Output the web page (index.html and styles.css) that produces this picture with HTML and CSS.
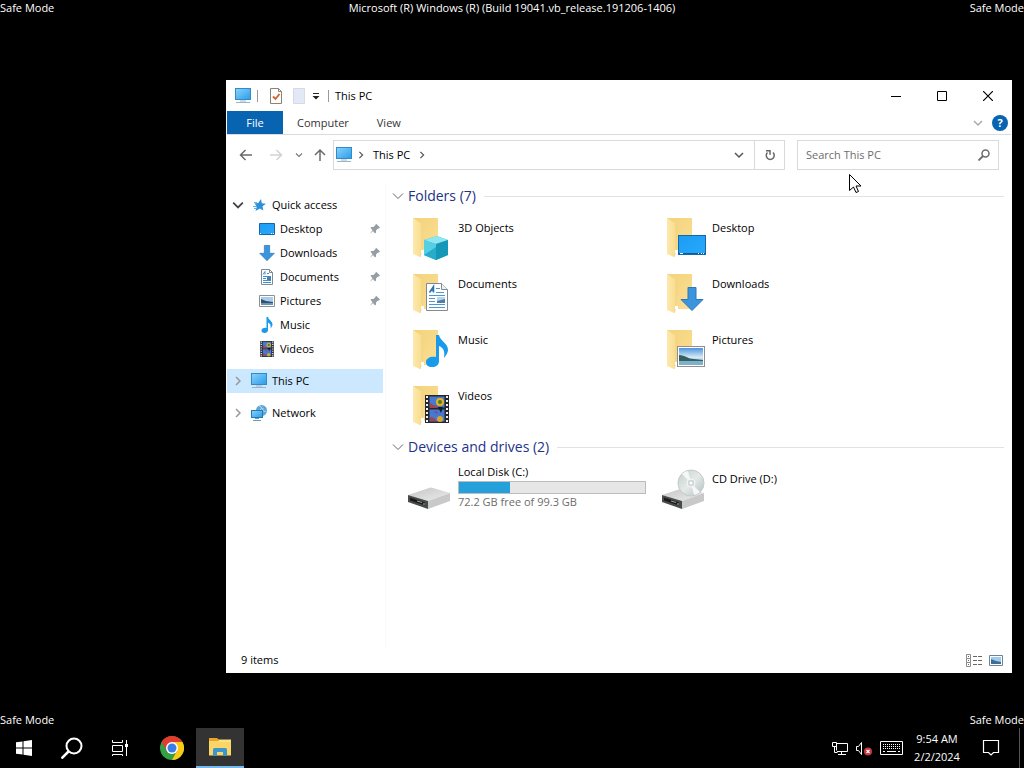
FILE: index.html
```html
<!DOCTYPE html>
<html lang="en">
<head>
    <meta charset="UTF-8">
    <meta name="viewport" content="width=device-width, initial-scale=1.0">
    <title>This PC</title>
    <link rel="stylesheet" href="styles.css">
</head>
<body>
    <!-- Shared icon shapes -->
    <svg class="sprite" aria-hidden="true">
        <defs>
            <linearGradient id="g-screen" x1="0" y1="0" x2="1" y2="1">
                <stop offset="0" stop-color="#8ad4fb"/>
                <stop offset="1" stop-color="#2a9ce8"/>
            </linearGradient>
            <linearGradient id="g-blue" x1="0" y1="0" x2="1" y2="1">
                <stop offset="0" stop-color="#1c9df5"/>
                <stop offset="1" stop-color="#27a9fb"/>
            </linearGradient>
            <linearGradient id="g-back" x1="0" y1="0" x2="1" y2="1">
                <stop offset="0" stop-color="#f3d27c"/>
                <stop offset="1" stop-color="#fbdf94"/>
            </linearGradient>
            <linearGradient id="g-flap" x1="0" y1="0" x2="1" y2="0">
                <stop offset="0" stop-color="#fde9ae"/>
                <stop offset="1" stop-color="#f9dc8c"/>
            </linearGradient>
            <linearGradient id="g-sky" x1="0" y1="0" x2="0" y2="1">
                <stop offset="0" stop-color="#4f93dc"/>
                <stop offset="0.55" stop-color="#d6ebf7"/>
                <stop offset="1" stop-color="#5b8fae"/>
            </linearGradient>
            <linearGradient id="g-top" x1="0" y1="0" x2="1" y2="1">
                <stop offset="0" stop-color="#c4c4c4"/>
                <stop offset="1" stop-color="#ececec"/>
            </linearGradient>
            <linearGradient id="g-disc" x1="0" y1="0" x2="1" y2="1">
                <stop offset="0" stop-color="#c3cccb"/>
                <stop offset="0.5" stop-color="#e4eae8"/>
                <stop offset="1" stop-color="#b4bfbd"/>
            </linearGradient>
        </defs>
        <symbol id="pc" viewBox="0 0 16 16">
            <rect x="0.5" y="0.5" width="15" height="11" fill="url(#g-screen)" stroke="#2f8bcb"/>
            <path d="M5 13h6M1 14.5h14" stroke="#9db3c3" fill="none"/>
        </symbol>
        <symbol id="folder" viewBox="0 0 48 48">
            <path d="M5 4h25v35H12z" fill="url(#g-back)"/>
            <path d="M5 4l9 6v27l-2 6-7-3z" fill="url(#g-flap)"/>
            <path d="M14 10v27l-2 6" fill="none" stroke="#edcf85" stroke-width="0.7"/>
            <path d="M13 36h3v3h-3z" fill="#fff"/>
        </symbol>
        <symbol id="arrow-down" viewBox="0 0 24 24">
            <path d="M8 0.5h8v12h7L12 23.5 1 12.5h7z" fill="#3c94dc" stroke="#2b78bd"/>
        </symbol>
        <symbol id="note" viewBox="0 0 22 32">
            <path d="M10 0h3c1 6 9 8 9 15 0 3-2 5-4 8 1-6 0-10-5-12v15c0 4-3 6-7 6-4 0-6-2-6-5 0-4 5-6 10-5z" fill="#179bea"/>
        </symbol>
        <symbol id="film" viewBox="0 0 24 28">
            <rect width="24" height="28" fill="#26272c"/>
            <path d="M2 1v27M22 1v27" stroke="#f4f4f4" stroke-width="2" stroke-dasharray="2 2"/>
            <path d="M4.500 1.500h15v11h-15zM4.500 14.500h15v12h-15z" fill="#4679cf"/>
            <path d="M5 8l3 2 4 1v2H5zM5 22l4 1 3 3H5z" fill="#a83f4b"/>
            <circle cx="15" cy="7" r="4" fill="#e6b51e"/>
            <circle cx="15" cy="7" r="2" fill="#4a7a2a"/>
            <path d="M13 12h5l-2 6z" fill="#191b20"/>
            <circle cx="15" cy="24" r="3" fill="#d9a82a"/>
            <path d="M8 17l4-1 1 3z" fill="#7b4a9c"/>
        </symbol>
        <symbol id="doc" viewBox="0 0 22 28">
            <path d="M0.500 0.500h15l6 6v21h-21z" fill="#fff" stroke="#7e8a94"/>
            <path d="M15.500 0.500v6h6" fill="#eef2f5" stroke="#7e8a94"/>
            <path d="M3.500 9.500L7.500 3.500v6M5 7.500h3" fill="none" stroke="#2a72b8" stroke-width="1.500"/>
            <path d="M10 5.500h4M10 9.500h8M3 12.500h16M3 15.500h6M3 18.500h6M3 21.500h16M3 24.500h16" stroke="#4f97cc"/>
            <path d="M11 14h8v6h-8z" fill="#4d7fa8"/>
            <path d="M11 14h8v2l-8 2z" fill="#b9d5ea"/>
        </symbol>
        <symbol id="photo" viewBox="0 0 28 21">
            <rect x="0.500" y="0.500" width="27" height="20" fill="#fff" stroke="#8f8f8f"/>
            <rect x="2" y="2" width="24" height="17" fill="url(#g-sky)"/>
            <path d="M2 9c6 0 9 4 15 4l9 1v1H2z" fill="#34605f"/>
            <path d="M2 15h24v4H2z" fill="#7fb0cb"/>
        </symbol>
        <symbol id="screen" viewBox="0 0 28 20">
            <rect x="0.500" y="0.500" width="27" height="19" fill="url(#g-blue)" stroke="#1667a5"/>
            <path d="M1 18.500h26" stroke="#0d5a96"/>
            <path d="M2 18.500h3M20 18.500h1M23 18.500h1M25 18.500h1" stroke="#fff"/>
        </symbol>
        <symbol id="pin" viewBox="0 0 12 12">
            <path d="M7.500 1L11 4.500l-1 1H9L7 7.500l0 2-1 1L4 8 1 11l2.500-4L1.500 5l1-1h2l2-2V1.500z" fill="#979da2"/>
        </symbol>
        <symbol id="drive" viewBox="0 0 42 22">
            <path d="M0 8L21 1q2-1 4 0l17 5-22 8z" fill="url(#g-top)"/>
            <path d="M0 8l20 6v8L0 15z" fill="#4a4a4a"/>
            <path d="M20 14l22-8v8l-22 8z" fill="#c9c9c9"/>
            <path d="M2 10.500l15 5v3L2 13.500z" fill="#1b1b1b"/>
            <path d="M9 14l5 1.500" stroke="#9f9f9f"/>
            <path d="M15 17h2" stroke="#7be07b"/>
        </symbol>
        <symbol id="chev-r" viewBox="0 0 8 10">
            <path d="M2 1l4 4-4 4" fill="none" stroke="currentColor" stroke-width="1.500"/>
        </symbol>
        <symbol id="chev-d" viewBox="0 0 10 8">
            <path d="M1 2l4 4 4-4" fill="none" stroke="currentColor" stroke-width="1.500"/>
        </symbol>
        <symbol id="chev-thin" viewBox="0 0 12 10">
            <path d="M1 2.500l5 5 5-5" fill="none" stroke="currentColor"/>
        </symbol>
    </svg>

    <div class="desktop">
        <div class="watermark watermark-top">
            <span>Safe Mode</span>
            <span>Microsoft (R) Windows (R) (Build 19041.vb_release.191206-1406)</span>
            <span>Safe Mode</span>
        </div>

        <main class="window">
            <header class="title-bar">
                <svg class="i16"><use href="#pc"/></svg>
                <span class="sep"></span>
                <button class="quick" aria-label="Properties">
                    <svg width="12" height="16"><path d="M0.500 0.500h8l3 3v12h-11z" fill="#fdfdfb" stroke="#8a8378"/><path d="M8.500 0.500v3h3" fill="none" stroke="#8a8378"/><path d="M3 8.500l2.500 2.500 4-5" fill="none" stroke="#d0622f" stroke-width="1.800"/></svg>
                </button>
                <button class="quick" aria-label="New folder">
                    <svg width="12" height="16"><path d="M0.500 0.500h11v15h-11z" fill="#e2e8f5" stroke="#d3daea"/></svg>
                </button>
                <button class="quick quick-menu" aria-label="Customize toolbar">
                    <svg width="8" height="8"><path d="M1 1.500h6" stroke="#222"/><path d="M0.500 4h7L4 7.500z" fill="#222"/></svg>
                </button>
                <span class="sep"></span>
                <h1 class="title">This PC</h1>
                <div class="window-buttons">
                    <button aria-label="Minimize"><svg width="10" height="10"><path d="M0 5.500h10" stroke="#000"/></svg></button>
                    <button aria-label="Maximize"><svg width="10" height="10"><path d="M0.500 0.500h9v9h-9z" fill="none" stroke="#000"/></svg></button>
                    <button aria-label="Close"><svg width="10" height="10"><path d="M0 0l10 10M10 0L0 10" stroke="#000" stroke-width="1.200"/></svg></button>
                </div>
            </header>

            <div class="tabs">
                <button class="tab tab-file">File</button>
                <button class="tab">Computer</button>
                <button class="tab">View</button>
                <div class="tabs-right">
                    <button class="expand" aria-label="Expand ribbon"><svg width="10" height="8"><use href="#chev-d"/></svg></button>
                    <button class="help" aria-label="Help">?</button>
                </div>
            </div>

            <div class="nav-bar">
                <div class="nav-buttons">
                    <button aria-label="Back"><svg width="14" height="12"><path d="M13 6H1.500M6.500 1L1.500 6l5 5" fill="none" stroke="#6b6b6b" stroke-width="1.500"/></svg></button>
                    <button aria-label="Forward"><svg width="14" height="12"><path d="M1 6h11.500M7.500 1l5 5-5 5" fill="none" stroke="#d2d2d2" stroke-width="1.500"/></svg></button>
                    <button class="recent" aria-label="Recent locations"><svg width="8" height="6"><use href="#chev-d"/></svg></button>
                    <button class="up" aria-label="Up"><svg width="12" height="14"><path d="M6 13V2M1 7l5-5 5 5" fill="none" stroke="#6b6b6b" stroke-width="1.500"/></svg></button>
                </div>
                <div class="address">
                    <svg class="i16"><use href="#pc"/></svg>
                    <svg class="crumb-arrow"><use href="#chev-r"/></svg>
                    <button class="crumb">This PC</button>
                    <svg class="crumb-arrow"><use href="#chev-r"/></svg>
                    <button class="history" aria-label="Previous locations"><svg width="10" height="8"><use href="#chev-d"/></svg></button>
                    <button class="refresh" aria-label="Refresh"><svg width="12" height="12"><path d="M9 3.500A4 4 0 1 1 3.500 3.500" fill="none" stroke="#666" stroke-width="1.500"/><path d="M2 1.800h4v4" fill="none" stroke="#666" stroke-width="1.500"/></svg></button>
                </div>
                <div class="search">
                    <input type="text" placeholder="Search This PC" aria-label="Search This PC">
                    <svg width="12" height="12"><circle cx="7.500" cy="4.500" r="3.500" fill="none" stroke="#6b6b6b" stroke-width="1.500"/><path d="M5 7l-4.500 4.500" stroke="#6b6b6b" stroke-width="1.800"/></svg>
                </div>
            </div>

            <div class="body">
                <nav class="tree">
                    <a class="row" href="#"><svg class="twist open"><use href="#chev-d"/></svg>
                        <svg class="i16" viewBox="0 0 16 16"><path d="M10 2l.8 4.200 4.200.6-3.500 2.500.8 4.200-3.500-2L4.500 14l1.300-4.500L3.500 6.500l3.800-.5z" fill="#2b8fdc"/><path d="M2 9.500h4M3 11.500h3M3 5.500h3" stroke="#5db0ea"/></svg>
                        Quick access</a>
                    <a class="row child" href="#"><svg class="i16" viewBox="0 0 16 16"><path d="M0.500 2.500h15v11h-15z" fill="url(#g-blue)" stroke="#1667a5"/><path d="M1 12.500h1M12 12.500h1M14 12.500h1" stroke="#fff"/></svg>Desktop<svg class="pin"><use href="#pin"/></svg></a>
                    <a class="row child" href="#"><svg class="i16"><use href="#arrow-down"/></svg>Downloads<svg class="pin"><use href="#pin"/></svg></a>
                    <a class="row child" href="#"><svg class="i16" viewBox="0 0 16 16"><path d="M2.500 0.500h8l3 3v12h-11z" fill="#fff" stroke="#7e8a94"/><path d="M10.500 0.500v3h3" fill="none" stroke="#7e8a94"/><path d="M4 5.500L6 2.500v3M8 4.500h2M4 7.500h8M4 9.500h3M4 11.500h8M4 13.500h8" fill="none" stroke="#3f8fce"/><path d="M8 8h4v3H8z" fill="#4d7fa8"/></svg>Documents<svg class="pin"><use href="#pin"/></svg></a>
                    <a class="row child" href="#"><svg class="i16" viewBox="0 0 16 16"><path d="M0.500 2.500h15v11h-15z" fill="#fff" stroke="#8f8f8f"/><path d="M2 4h12v8H2z" fill="#a9cdec"/><path d="M2 6l5 2 7 1v1H2z" fill="#34506f"/><path d="M2 10h12v2H2z" fill="#6d93b5"/></svg>Pictures<svg class="pin"><use href="#pin"/></svg></a>
                    <a class="row child" href="#"><svg class="i16"><use href="#note"/></svg>Music</a>
                    <a class="row child" href="#"><svg class="i16"><use href="#film"/></svg>Videos</a>
                    <a class="row root selected" href="#"><svg class="twist"><use href="#chev-r"/></svg><svg class="i16"><use href="#pc"/></svg>This PC</a>
                    <a class="row root" href="#"><svg class="twist"><use href="#chev-r"/></svg>
                        <svg class="i16" viewBox="0 0 16 16"><circle cx="10.500" cy="5.500" r="5.500" fill="#5fa6d6"/><path d="M8 1c3 0 3 3 1 4M12 3c-1 3 1 4 3 3" fill="none" stroke="#c5e3f4"/><rect x="0.500" y="5.500" width="11" height="7" fill="url(#g-screen)" stroke="#2378b5"/><path d="M4 13.500h4M2 15.500h8" stroke="#6b9dbf"/></svg>
                        Network</a>
                </nav>

                <div class="content">
                    <section class="group">
                        <h2><svg><use href="#chev-thin"/></svg>Folders (7)</h2>
                        <div class="items">
                            <a class="item" href="#">
                                <svg class="i48" viewBox="0 0 48 48"><use href="#folder"/><path d="M16 26l13-4 11 4v15l-12 5-12-5z" fill="#32b8d4"/><path d="M16 26l13-4 11 4-12 4z" fill="#8de6f0"/><path d="M16 26l12 4v16l-12-5z" fill="#55cfe4"/><path d="M28 30l12-4v15l-12 5z" fill="#1598b8"/><path d="M16 41l12-8v13z" fill="#27acca"/></svg>
                                <span class="label">3D Objects</span>
                            </a>
                            <a class="item" href="#">
                                <svg class="i48" viewBox="0 0 48 48"><use href="#folder"/><use href="#screen" x="16" y="21" width="28" height="20"/></svg>
                                <span class="label">Desktop</span>
                            </a>
                            <a class="item" href="#">
                                <svg class="i48" viewBox="0 0 48 48"><use href="#folder"/><use href="#doc" x="18" y="13" width="22" height="28"/></svg>
                                <span class="label">Documents</span>
                            </a>
                            <a class="item" href="#">
                                <svg class="i48" viewBox="0 0 48 48"><use href="#folder"/><use href="#arrow-down" x="18" y="17" width="24" height="24"/></svg>
                                <span class="label">Downloads</span>
                            </a>
                            <a class="item" href="#">
                                <svg class="i48" viewBox="0 0 48 48"><use href="#folder"/><use href="#note" x="18" y="9" width="22" height="32"/></svg>
                                <span class="label">Music</span>
                            </a>
                            <a class="item" href="#">
                                <svg class="i48" viewBox="0 0 48 48"><use href="#folder"/><use href="#photo" x="15" y="20" width="28" height="21"/></svg>
                                <span class="label">Pictures</span>
                            </a>
                            <a class="item" href="#">
                                <svg class="i48" viewBox="0 0 48 48"><use href="#folder"/><use href="#film" x="17" y="13" width="24" height="28"/></svg>
                                <span class="label">Videos</span>
                            </a>
                        </div>
                    </section>

                    <section class="group">
                        <h2><svg><use href="#chev-thin"/></svg>Devices and drives (2)</h2>
                        <div class="items">
                            <a class="item" href="#">
                                <svg class="i48" viewBox="0 0 48 48"><use href="#drive" y="22" width="42" height="22"/></svg>
                                <span class="drive">
                                    <span>Local Disk (C:)</span>
                                    <span class="usage"><span class="used" style="width: 27.3%"></span></span>
                                    <span class="free">72.2 GB free of 99.3 GB</span>
                                </span>
                            </a>
                            <a class="item" href="#">
                                <svg class="i48" viewBox="0 0 48 48"><use href="#drive" y="22" width="42" height="22"/><circle cx="29" cy="18" r="13" fill="url(#g-disc)" stroke="#c3cccb"/><path d="M29 18L20 9a13 13 0 0 1 6-3zM29 18l9 9a13 13 0 0 1-6 3z" fill="#f5f8f7"/><circle cx="29" cy="18" r="4" fill="#cfd8d6" stroke="#f8fafa"/><circle cx="29" cy="18" r="1.500" fill="#fff"/></svg>
                                <span class="label">CD Drive (D:)</span>
                            </a>
                        </div>
                    </section>
                </div>
            </div>

            <footer class="status-bar">
                <span>9 items</span>
                <div class="view-buttons">
                    <button aria-label="Details view"><svg width="16" height="13"><path d="M0.500 0.500h4v4h-4zM0.500 4.500h4v4h-4zM0.500 8.500h4v4h-4z" fill="#fff" stroke="#8b8b8b"/><path d="M2 2.500h1M2 6.500h1M2 10.500h1M7 2.500h4M12 2.500h4M7 6.500h4M12 6.500h4M7 10.500h4M12 10.500h4" stroke="#666"/></svg></button>
                    <button aria-label="Large icons view"><svg width="14" height="11" viewBox="0 0 14 11"><path d="M0.500 0.500h13v10h-13z" fill="#fff" stroke="#6f8394"/><path d="M2 2h10v7H2z" fill="#9ccdf0"/><path d="M2 4l5 2 5 1v2H2z" fill="#3c6f92"/></svg></button>
                </div>
            </footer>
        </main>

        <svg class="cursor" width="12" height="19"><path d="M0.500 0.500v16l4-3.500 2.500 5.500 2.500-1-2.500-5.500h5z" fill="#fff" stroke="#000"/></svg>

        <div class="watermark">
            <span>Safe Mode</span>
            <span>Safe Mode</span>
        </div>
        <footer class="taskbar">
            <button class="task" aria-label="Start"><svg width="16" height="16"><path d="M0 2.300L6.500 1.400v6.100H0zM7.500 1.200L16 0v7.500H7.500zM0 8.500h6.500v6.100L0 13.700zM7.500 8.500H16V16l-8.500-1.200z" fill="#fff"/></svg></button>
            <button class="task" aria-label="Search"><svg width="22" height="22"><circle cx="13" cy="9" r="7.500" fill="none" stroke="#fff" stroke-width="2"/><path d="M7.500 14.500L0.500 21.500" stroke="#fff" stroke-width="2.500"/></svg></button>
            <button class="task" aria-label="Task view"><svg width="16" height="16"><path d="M0.500 0v2.500h10V0M0.500 5.500h10v6h-10zM0.500 16v-1.500h10V16M14.500 0v16" fill="none" stroke="#fff"/><path d="M13 4h3v3h-3z" fill="#fff"/></svg></button>
            <button class="task task-app" aria-label="Chrome">
                <svg width="24" height="24" viewBox="0 0 24 24"><circle cx="12" cy="12" r="12" fill="#34a045"/><path d="M1.600 6A12 12 0 0 1 22.400 6H12L7 15z" fill="#e33b2e"/><path d="M22.400 6A12 12 0 0 1 12 24l5-9-5-9z" fill="#fbc916"/><circle cx="12" cy="12" r="6" fill="#fff"/><circle cx="12" cy="12" r="4.500" fill="#3b7de8"/></svg>
            </button>
            <button class="task active" aria-label="File Explorer">
                <svg width="22" height="20"><path d="M0 2.500h22v16H0z" fill="#fbd667"/><path d="M0 4V1h8l2 2h12v1z" fill="#e8a52c"/><path d="M10 3h12v2H9z" fill="#fbe08a"/><path d="M4 19v-6.500q0-1.500 1.500-1.500h11q1.500 0 1.500 1.500V19h-4v-4H8v4z" fill="#3d94cf"/></svg>
            </button>
            <div class="tray">
                <svg width="16" height="16"><path d="M4.500 3.500h11v8h-11zM9.500 11.500v3M6 14.500h8" fill="none" stroke="#fff"/><path d="M0.500 2.500h4v4h-4zM2.500 6.500v6h3" fill="#000" stroke="#fff"/></svg>
                <svg width="16" height="16"><path d="M0.500 6.500h2l3-4v12l-3-4h-2z" fill="none" stroke="#fff"/><circle cx="12" cy="11.500" r="4" fill="#c9363f"/><path d="M10.500 10l3 3M13.500 10l-3 3" stroke="#fff" stroke-width="1.200"/></svg>
                <svg width="23" height="16"><path d="M0.500 1.500h22v13h-22z" fill="none" stroke="#fff"/><path d="M3 4.500h17M3 6.500h17M3 8.500h17" stroke="#fff" stroke-dasharray="1 1"/><path d="M3 11.500h2M7 11.500h9M18 11.500h2" stroke="#fff"/></svg>
                <button class="clock"><span>9:54 AM</span><span>2/2/2024</span></button>
                <button class="notify" aria-label="Notifications"><svg width="18" height="18"><path d="M1.500 1.500h15v12h-5L9 16l-2.500-2.500h-5z" fill="none" stroke="#fff" stroke-width="1.200"/></svg></button>
                <button class="show-desktop" aria-label="Show desktop"></button>
            </div>
        </footer>
    </div>
</body>
</html>
```
FILE: styles.css
```css
* {
    box-sizing: border-box;
}
body {
    margin: 0;
    background: #000;
    color: #000;
    font-family: "Open Sans", "Noto Sans", sans-serif;
    font-size: 11px;
    line-height: 16px;
}
button {
    display: flex;
    align-items: center;
    justify-content: center;
    padding: 0;
    border: none;
    background: none;
    color: inherit;
    font: inherit;
}
a {
    color: inherit;
    text-decoration: none;
}
svg {
    display: block;
    flex: none;
}
.sprite {
    position: absolute;
    width: 0;
    height: 0;
}
.i16 {
    width: 16px;
    height: 16px;
}
.i48 {
    width: 48px;
    height: 48px;
}

/* Desktop */
.desktop {
    position: relative;
    display: flex;
    flex-direction: column;
    min-height: 100vh;
}
.watermark {
    display: flex;
    justify-content: space-between;
    color: #fff;
}
.watermark-top {
    margin-bottom: auto;
}
.cursor {
    position: absolute;
    left: 849px;
    top: 174px;
}

/* Explorer window */
.window {
    position: absolute;
    top: 80px;
    right: 12px;
    bottom: 95px;
    left: 226px;
    display: flex;
    flex-direction: column;
    border: 1px solid #fff;
    background: #fff;
}
.title-bar {
    display: flex;
    align-items: center;
    height: 30px;
    padding-left: 8px;
}
.sep {
    width: 1px;
    height: 12px;
    margin: 0 6px;
    background: #999;
}
.quick {
    width: 23px;
}
.quick-menu {
    width: 12px;
}
.title {
    margin: 0;
    font-size: 11px;
    font-weight: normal;
}
.window-buttons {
    display: flex;
    align-self: stretch;
    margin-left: auto;
}
.window-buttons button {
    width: 46px;
}
.tabs {
    display: flex;
    height: 24px;
    border-bottom: 1px solid #dadbdc;
    color: #333;
}
.tab {
    padding: 0 14px;
}
.tab-file {
    width: 56px;
    background: #0863b1;
    color: #fff;
}
.tabs-right {
    display: flex;
    align-items: center;
    gap: 9px;
    margin-left: auto;
    padding-right: 3px;
}
.expand {
    color: #aaa;
}
.help {
    width: 16px;
    height: 16px;
    border-radius: 50%;
    background: #0863b1;
    color: #fff;
    font-weight: bold;
}
.nav-bar {
    display: flex;
    padding: 5px 12px 14px;
}
.nav-buttons {
    display: flex;
    align-items: center;
    gap: 16px;
}
.nav-buttons .recent {
    margin-right: -5px;
    margin-left: -4px;
    color: #777;
}
.nav-buttons .up {
    margin-right: 7px;
}
.address {
    display: flex;
    flex: 1;
    align-items: center;
    height: 30px;
    padding-left: 2px;
    border: 1px solid #d9d9d9;
}
.crumb-arrow {
    width: 8px;
    height: 8px;
    margin: 0 5px;
    color: #555;
}
.crumb {
    padding: 0 3px;
}
.history {
    width: 30px;
    margin-left: auto;
    color: #555;
}
.refresh {
    align-self: stretch;
    width: 30px;
    border-left: 1px solid #d9d9d9;
}
.search {
    display: flex;
    align-items: center;
    width: 202px;
    height: 30px;
    margin-left: 12px;
    padding: 0 8px;
    border: 1px solid #d9d9d9;
}
.search input {
    flex: 1;
    min-width: 0;
    padding: 0;
    border: none;
    outline: none;
    background: none;
    font: inherit;
}
.search input::placeholder {
    color: #6d6d6d;
    opacity: 1;
}
.body {
    display: flex;
    flex: 1;
    min-height: 0;
}

/* Navigation pane */
.tree {
    width: 159px;
    padding: 9px 2px 0 0;
    border-right: 1px solid #fafafa;
}
.row {
    display: flex;
    align-items: center;
    gap: 5px;
    height: 24px;
    padding-left: 5px;
}
.row.child {
    padding-left: 32px;
}
.row.root {
    margin-top: 8px;
}
.row.selected {
    background: #cce8ff;
}
.twist {
    width: 12px;
    height: 10px;
    color: #999;
}
.twist.open {
    color: #444;
}
.row .twist + .i16 {
    margin-left: 2px;
}
.pin {
    width: 12px;
    height: 12px;
    margin-right: 2px;
    margin-left: auto;
}

/* File list */
.content {
    flex: 1;
    padding-right: 7px;
    padding-left: 6px;
}
.group h2 {
    display: flex;
    align-items: center;
    gap: 4px;
    height: 24px;
    margin: 0;
    color: #1e3287;
    font-size: 14px;
    font-weight: normal;
}
.group h2 svg {
    width: 12px;
    height: 10px;
    color: #666;
}
.group h2::after {
    content: "";
    flex: 1;
    height: 1px;
    margin-left: 4px;
    background: #e2e2e2;
}
.group + .group {
    margin-top: 3px;
}
.items {
    display: grid;
    grid-template-columns: repeat(auto-fill, 254px);
    padding-left: 16px;
}
.item {
    display: flex;
    gap: 2px;
    height: 56px;
}
.item .i48 {
    margin-top: 6px;
}
.label {
    margin-top: 12px;
}
.drive {
    display: flex;
    flex-direction: column;
    width: 188px;
    margin-top: 5px;
}
.usage {
    height: 13px;
    margin-top: 1px;
    border: 1px solid #bcbcbc;
    background: #e6e6e6;
}
.used {
    display: block;
    height: 100%;
    background: #26a0da;
}
.free {
    color: #6d6d6d;
}
.status-bar {
    display: flex;
    align-items: center;
    justify-content: space-between;
    height: 24px;
    padding: 0 8px 0 14px;
}
.view-buttons {
    display: flex;
    align-items: center;
    gap: 7px;
}

/* Taskbar */
.taskbar {
    display: flex;
    height: 40px;
    color: #fff;
}
.task {
    width: 48px;
}
.task-app {
    margin-left: 4px;
}
.task.active {
    border-bottom: 2px solid #76b9ed;
    background: #333;
}
.tray {
    display: flex;
    align-items: center;
    gap: 8px;
    margin-left: auto;
}
.clock {
    flex-direction: column;
    width: 52px;
    line-height: 18px;
}
.notify {
    width: 40px;
}
.show-desktop {
    width: 5px;
    height: 40px;
    border-left: 1px solid #555;
}
```
